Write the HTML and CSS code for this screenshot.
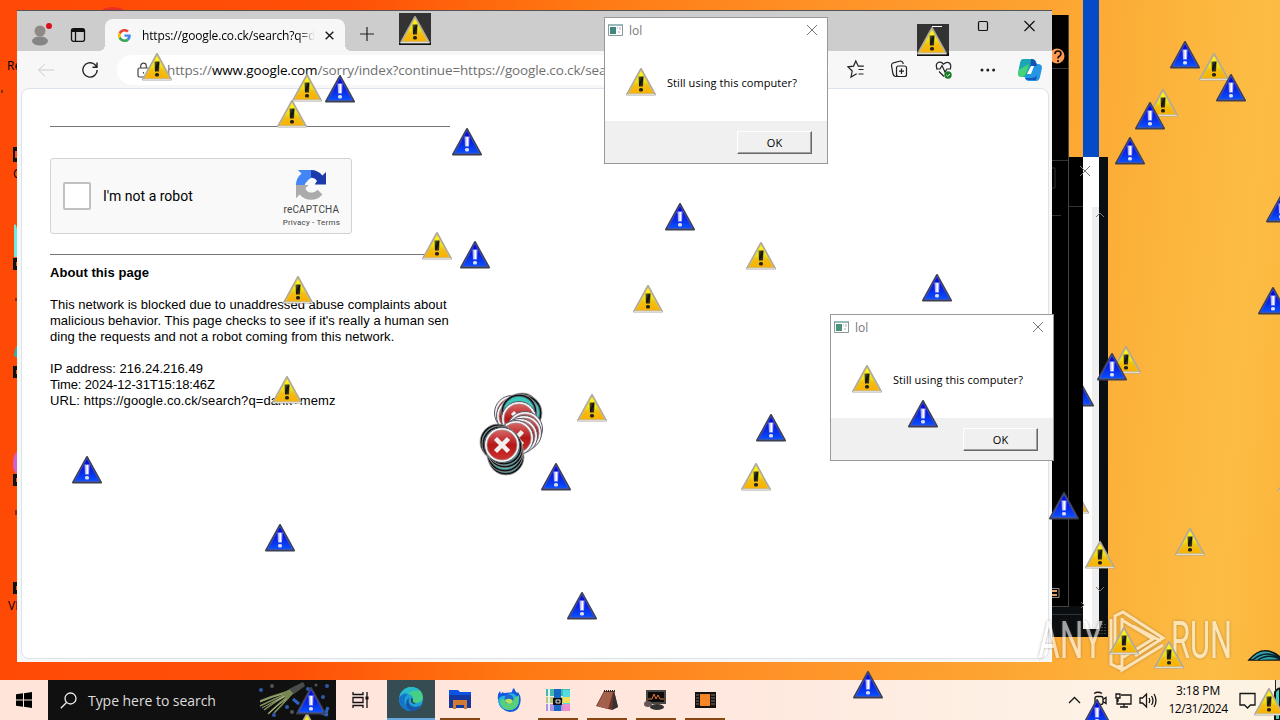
FILE: index.html
```
<!DOCTYPE html>
<html lang="en">
<head>
<meta charset="utf-8">
<title>Desktop</title>
<link rel="stylesheet" href="styles.css">
</head>
<body>
<svg class="defs" width="0" height="0">
  <defs>
    <linearGradient id="gold" x1="0" y1="0" x2="0" y2="1"><stop offset="0" stop-color="#ffff10"/><stop offset=".5" stop-color="#efe010"/><stop offset=".65" stop-color="#f0bf10"/><stop offset="1" stop-color="#fbb000"/></linearGradient>
    <linearGradient id="ink" x1="0" y1="0" x2="1" y2="1"><stop offset="0" stop-color="#6a6438"/><stop offset=".5" stop-color="#111"/><stop offset="1" stop-color="#4a4530"/></linearGradient>
    <linearGradient id="cobalt" x1="0" y1="0" x2="0" y2="1"><stop offset="0" stop-color="#0303dc"/><stop offset=".5" stop-color="#0a20e2"/><stop offset="1" stop-color="#0750ff"/></linearGradient>
    <linearGradient id="ruby" x1="0" y1="0" x2="0" y2="1"><stop offset="0" stop-color="#d76565"/><stop offset=".5" stop-color="#b51818"/><stop offset="1" stop-color="#cf3030"/></linearGradient>
    <!-- all stickers are centred on 0,0 -->
    <g id="warn">
      <path d="M0-13 14 12.600H-14z" fill="#c4c0b4" stroke="#aba79c" stroke-width="2" stroke-linejoin="round"/>
      <path d="M0-11.500 12.500 11.300H-12.500z" fill="url(#gold)" stroke="#e0c068" stroke-width=".7"/>
      <path d="M-14 12.500H14" stroke="#dedbd6" stroke-width="1"/>
      <path d="M-2.500-5.500H2.500L2 4.500H-2z" fill="url(#ink)"/><rect x="-2" y="6" width="4" height="3.600" rx="1.500" fill="#222"/>
    </g>
    <g id="note">
      <path d="M0-13 14 12.500H-14z" fill="#404563" stroke="#3c4052" stroke-width="2" stroke-linejoin="round"/>
      <path d="M0-11.500 12.500 11.300H-12.500z" fill="url(#cobalt)" stroke="#4b5fd0" stroke-width=".6"/>
      <path d="M-2.500-5.500H2.500L2 4.500H-2z" fill="#aab2f4"/><path d="M.2-5V4" stroke="#fff" stroke-width="1.600"/><rect x="-2" y="6" width="4" height="3.600" rx="1.500" fill="#dde"/>
    </g>
    <g id="stop">
      <circle r="17.500" fill="#f4f4f4" stroke="#556" stroke-width="1"/>
      <circle r="15" fill="url(#ruby)" stroke="#ab8080" stroke-width=".8"/>
      <path d="M-6.500-6.500 6.500 6.500M6.500-6.500-6.500 6.500" stroke="#f0eeee" stroke-width="4.500"/>
    </g>
    <g id="stop-inv">
      <circle r="18" fill="#111" stroke="#aaa" stroke-width=".8"/>
      <circle r="15.800" fill="#3bc9bc" stroke="#467" stroke-width=".8"/>
    </g>
  </defs>
</svg>

<div class="desktop">
  <svg class="shortcuts" width="18" height="680">
    <path d="M14 225q4-6 4 32h-4z" fill="#71eadf"/><path d="M14 356q1-9 4-12v14z" fill="#25b8a6"/><path d="M18 450q-5 5-5 14t5 10z" fill="#d060cf"/>
    <path d="M13 147h5v15h-5zM13 258h5v12h-5zM13 366h5v12h-5zM13 474h5v12h-5zM13 582h5v12h-5z" fill="#111"/>
    <path d="M15 151h3v7h-3zM16 262h2v4h-2zM16 370h2v4h-2zM16 478h2v4h-2zM16 586h2v4h-2z" fill="#ff4c08"/>
    <path d="M2 90v3M16 298v3M16 510v5" stroke="#111"/>
    <text x="7" y="70">Re</text><text x="13" y="178">C</text><text x="8" y="610">VL</text>
  </svg>
  <div class="avatar-dot"></div>

  <div class="stripe"></div>
  <div class="backwin backwin-lower"></div>
  <div class="backwin backwin-upper"></div>
  <div class="trail">
    <svg width="16" height="472"><path d="M9 50H16V472H9z" fill="#efefef"/><use href="#note" x="-4" y="236"/><use href="#warn" x="-9" y="343"/></svg>
  </div>
  <svg class="backicons" width="60" height="680">
    <circle cx="5" cy="56" r="7.500" fill="#ff9a50"/><path d="M3 54q0-3 3-3t3 3q0 1-2 2.500-1 .6-1 2M6 60v2" stroke="#111" stroke-width="1.700" fill="none"/>
    <path d="M0 68.500H16M0 160.500H16M0 215.500H9M0 168h3v20H0M17 206.500H31M0 614.500H30" stroke="#333" fill="none"/>
    <path d="M28 166l10 10M38 166l-10 10M44 217l4-4 4 4M44 587l4 4 4-4M29 602l3 3-3 3" stroke="#777" fill="none"/>
    <path d="M0 588.500h7v9H0" stroke="#888" fill="none"/><path d="M0 591h5M0 595h5" stroke="#e9a15f" stroke-width="2"/>
    <path d="M50 624v10M53 624v10M47 630v4" stroke="#777" stroke-dasharray="1 2"/>
  </svg>

  <div class="browser">
    <div class="tabstrip">
      <svg class="profile" width="26" height="26" viewBox="0 0 26 26"><ellipse cx="11" cy="20" rx="8" ry="4.500" fill="#858585"/><circle cx="11" cy="10" r="5.500" fill="#8f8986"/><circle cx="20" cy="5" r="3" fill="#d8101c"/></svg>
      <svg class="workspaces" width="16" height="16" viewBox="0 0 16 16" fill="none" stroke="#111" stroke-width="1.300"><rect x="1.500" y="1.700" width="13" height="12.600" rx="2"/><path d="M1.500 3.500H14.500" stroke-width="3"/><path d="M5.500 4V14"/></svg>
      <div class="tab">
        <svg width="13" height="13" viewBox="0 0 48 48"><path fill="#EA4335" d="M24 9.500c3.500 0 6.700 1.200 9.200 3.600l6.900-6.900C35.900 2.400 30.500 0 24 0 14.600 0 6.500 5.400 2.600 13.200l8 6.200C12.400 13.700 17.700 9.500 24 9.500z"/><path fill="#4285F4" d="M47 24.500c0-1.600-.2-3.100-.4-4.500H24v9h12.900c-.6 3-2.200 5.500-4.700 7.200l7.700 6C44.400 38 47 31.800 47 24.500z"/><path fill="#FBBC05" d="M10.500 28.600a14.500 14.500 0 0 1 0-9.200l-8-6.200a24 24 0 0 0 0 21.600z"/><path fill="#34A853" d="M24 48c6.500 0 11.900-2.100 15.900-5.800l-7.700-6c-2.200 1.500-4.900 2.300-8.200 2.300-6.300 0-11.600-4.200-13.500-9.900l-8 6.200C6.500 42.600 14.600 48 24 48z"/></svg>
        <span class="tab-title">https://google.co.ck/search?q=d</span>
        <svg width="9" height="9" viewBox="0 0 9 9"><path d="M.7.7l7.600 7.600M8.300.7L.7 8.300" stroke="#111" stroke-width="1.300"/></svg>
      </div>
      <svg class="newtab" width="14" height="14"><path d="M7 0V14M0 7H14" stroke="#222" stroke-width="1.200"/></svg>
      <svg class="caption" width="60" height="12" viewBox="0 0 60 12" fill="none" stroke="#111" stroke-width="1.200"><rect x="1.500" y="1.500" width="9" height="9" rx="1.300"/><path d="M47.500 1l10 10M57.500 1l-10 10"/></svg>
    </div>
    <div class="toolbar">
      <svg class="back" width="18" height="14" fill="none" stroke="#ccc"><path d="M17 7H1.500M8 .8L1.500 7 8 13.200"/></svg>
      <svg class="reload" width="18" height="18" fill="none" stroke="#222" stroke-width="1.400"><path d="M16.200 9A7.200 7.200 0 1 1 13.500 3.300L16 6M16 1.500V6.200H11.500"/></svg>
      <div class="address">
        <svg width="13" height="16" fill="none" stroke="#444" stroke-width="1.200"><rect x="1" y="6" width="11" height="9" rx="1.500"/><path d="M3.700 6V4a2.800 2.800 0 0 1 5.600 0V6M6.500 10v1.500"/></svg>
        <span class="url">https://<b>www.google.com</b>/sorry/index?continue=https://google.co.ck/sear</span>
      </div>
      <svg class="tools" width="200" height="26" viewBox="0 0 200 26" fill="none" stroke="#222" stroke-width="1.200">
        <path d="M9.700 16.700L4 20l1.200-6L1 9.800l5.600-.7L8.800 4l2.500 5.200h5.500M11.500 12.500h5M11.500 17h5"/>
        <path d="M50 19.500h-1.500q-2-.5-2.500-2.500l-1.500-8.500q0-2 1.800-2.700l7-1.800q2 0 2.700 2l.3 1"/><rect x="49.500" y="9" width="10" height="10.500" rx="2"/><path d="M54.500 11.500v5.500M52 14.200h5"/>
        <path d="M90 11.500q-2-4.500 1.500-6.200 3-.9 5 1.900 3-3 6-1.200 2 2 .9 5.500M89 12h4l2-3.500 3 6.500 2-3h4M92 14.500l5 5"/><circle cx="101" cy="18" r="3.700" fill="#1b7c27" stroke="none"/><path d="M99.300 18l1.200 1.200L103 17" stroke="#fff" stroke-width=".9"/>
        <g fill="#222" stroke="none"><circle cx="135" cy="13" r="1.500"/><circle cx="140.800" cy="13" r="1.500"/><circle cx="146.600" cy="13" r="1.500"/></g>
        <g stroke="none"><path d="M176 2h9q3 0 4 3l1 4h-5l-4 11h-6q-4 0-4-4l2-10q.8-4 3-4z" fill="#1aa6b2"/><path d="M173 12l9-5-2 7q-2 6-5 6-5 0-4-5z" fill="#47d17b"/><path d="M190 7h1q4 0 4 4l-2 9q-1 4-4 4h-7q-3 0-4-3l-.5-2q4 1 6-5l2-7q1-3 3-3z" fill="#2596e5"/><path d="M184 2q4 0 5 4l1 3h-3q-3 0-4 4z" fill="#1350b5"/><path d="M178 21h7q3 0 5-3l-1 5H182q-3 0-4-2z" fill="#1757c2"/><path d="M184 9h3l-3 8h-4z" fill="#fff"/></g>
      </svg>
    </div>
    <div class="page">
      <hr>
      <div class="captcha">
        <span class="box"></span>
        <span class="label">I'm not a robot</span>
        <div class="brand">
          <svg width="30" height="30" viewBox="0 0 64 64"><path fill="#1c3aa9" d="M64 32V4l-7.700 7.700A32 32 0 0 0 31.800 0v16.500a15 15 0 0 1 13 7L40 31H64z"/><path fill="#4285f4" d="M32 0H4l7.800 7.700A32 32 0 0 0 0 32h18.500l1.500-4 7-8 5-3z"/><path fill="#ababab" d="M0 32v28l7.700-7.700a32 32 0 0 0 48.800 0L46 42q-5 6-14 6c-7 0-10-4-12-9l7-7z"/></svg>
          <span>reCAPTCHA</span>
          <small>Privacy - Terms</small>
        </div>
      </div>
      <hr>
      <div class="about">
        <b>About this page</b>
        <p>This network is blocked due to unaddressed abuse complaints about<br>malicious behavior. This page checks to see if it's really a human sen<br>ding the requests and not a robot coming from this network.</p>
        <p>IP address: 216.24.216.49<br><span class="time">Time: 2024-12-31T15:18:46Z</span><br><span class="link">URL: https://google.co.ck/search?q=dank+memz</span></p>
      </div>
    </div>
  </div>

  <div class="dialog dialog-a">
    <div class="dialog-title"><svg width="15" height="12"><path d="M.5.500h14v11H.5z" fill="#fff" stroke="#899"/><path d="M1 1h13" stroke="#9bb" stroke-width="2"/><path d="M2 3h6v7H2z" fill="#3f8580"/><path d="M9 4h1M12 3v3M10 8h2" stroke="#aab"/></svg><span>lol</span><svg class="x" width="10" height="10"><path d="M0 0l10 10M10 0L0 10" stroke="#777"/></svg></div>
    <div class="dialog-body"><svg width="32" height="32" viewBox="-16 -15 32 32"><use href="#warn"/></svg><span>Still using this computer?</span></div>
    <div class="dialog-foot"><div class="ok">OK</div></div>
  </div>
  <div class="dialog dialog-b">
    <div class="dialog-title"><svg width="15" height="12"><path d="M.5.500h14v11H.5z" fill="#fff" stroke="#899"/><path d="M1 1h13" stroke="#9bb" stroke-width="2"/><path d="M2 3h6v7H2z" fill="#4b9279"/><path d="M9 4h1M12 3v3M10 8h2" stroke="#aab"/></svg><span>lol</span><svg class="x" width="10" height="10"><path d="M0 0l10 10M10 0L0 10" stroke="#777"/></svg></div>
    <div class="dialog-body"><svg width="32" height="32" viewBox="-16 -15 32 32"><use href="#warn"/></svg><span>Still using this computer?</span></div>
    <div class="dialog-foot"><div class="ok">OK</div></div>
  </div>
</div>

<div class="taskbar">
  <div class="start"><svg width="16" height="16"><path d="M0 2.300L7 1.300V7.500H0zM8 1.200L16 0V7.500H8zM0 8.500H7V14.700L0 13.700zM8 8.500H16V16L8 14.800z"/></svg></div>
  <div class="search">
    <svg width="17" height="17" fill="none" stroke="#eee" stroke-width="1.300"><circle cx="10.500" cy="6.500" r="5.500"/><path d="M6.500 10.500L.8 16.200"/></svg>
    <span>Type here to search</span>
    <svg class="art" width="76" height="40" fill="none">
      <g stroke="#7f9058" stroke-width="1.600"><path d="M28 12Q14 16 2 21M28 14Q14 20 2 26M29 15Q16 22 6 30M30 16Q20 24 10 34M31 17Q24 25 16 33"/></g><g stroke="#d9e0ad" stroke-width=".7"><path d="M28 13Q14 17 2 22M29 15Q16 21 4 28M31 17Q21 24 11 33"/></g>
      <path d="M24 13l8-4 4 4-7 7z" fill="#758851"/><path d="M31 9L45 2l2 4-11 8z" fill="#484d49"/>
      <g fill="#2e5aa7"><circle cx="3" cy="10" r="2"/><circle cx="50" cy="9" r="2"/><circle cx="69" cy="6" r="2"/><circle cx="65" cy="17" r="2"/><circle cx="16" cy="35" r="2"/><circle cx="29" cy="27" r="2"/></g><g fill="#555"><circle cx="14" cy="6" r="2"/><circle cx="34" cy="32" r="2"/><circle cx="58" cy="5" r="1.500"/></g>
      <path d="M35 19l6 5M58 31l12 4M70 27l-3 9" stroke="#2b65c0" stroke-width="3"/>
    </svg>
  </div>
  <div class="taskview"><svg width="17" height="16" fill="none" stroke="#111" stroke-width="1.300"><path d="M1 0V2.500H11V0M1 16V13.500H11V16M1 5.500H11V10.500H1zM15 0V16"/><path d="M13.500 6h3" stroke-width="3"/></svg></div>
  <div class="apps">
    <div class="app active"><svg width="24" height="24" viewBox="0 0 24 24"><circle cx="12" cy="12" r="12" fill="#1f9fd8"/><path d="M1 8Q6-1 14 .2 24 2 24 11q-1 5-7 5-4 0-3-3 1-5-5-6-5 0-8 5z" fill="#45cf87"/><path d="M1 8Q5 1 12 0q6 0 9 4-8-2-12 3-4 0-8 4z" fill="#27b9d0"/><path d="M9 7q-5 4-3 10 2 6 9 7Q7 25 3 20q-3-4-3-9 4-6 9-4z" fill="#1474c9"/><path d="M10 10q-2 9 6 10 3 0 6-2-4 7-10 6-9-5-2-14z" fill="#1856a9"/><path d="M12 11q2 0 2 2-1 3 3 3l-2 1q-4-1-3-6z" fill="#294d55"/></svg></div>
    <div class="app open"><svg width="22" height="20"><path d="M0 0h9l2 2h11v16H0z" fill="#0a54e5"/><path d="M0 5h22v13H0z" fill="#1437a0"/><path d="M4 19V10h14v9h-3v-4H7v4z" fill="#d07a35"/></svg></div>
    <div class="app"><svg width="24" height="24"><path d="M1 12Q0 6 3 3l1 3Q5 3 7 5q5 0 8-1 0-3 2-4 1 3 3 5l1-1q4 5 2 12-2 8-10 8Q2 22 1 12z" fill="#1558e0"/><path d="M1 12q3-5 8-4 4-4 8-2 5 3 5 9-3 7-9 7Q2 22 1 12z" fill="#25b5d9"/><path d="M3 13q4-4 8-2 6 1 11-4 1 15-10 15Q5 22 3 13z" fill="#58cf7b"/><circle cx="12" cy="11" r="4.500" fill="#2066d7"/><path d="M8 12q5-3 8 1-3 6-8 0z" fill="#b3e55a"/></svg></div>
    <div class="app open"><svg width="24" height="22"><path d="M0 0h24v7H0z" fill="#42b9ae"/><path d="M0 8h24v6H0z" fill="#bcc675"/><path d="M0 15h24v7H0z" fill="#b491dc"/><path d="M17 1h7v21h-7z" fill="#53dce1"/><path d="M17 8h7v6h-7z" fill="#eee05d"/><path d="M17 15h7v7h-7z" fill="#ef8cc9"/><path d="M3 0v22M14 0v22" stroke="#e3f2ef" stroke-width="2"/><path d="M8 0h7v22H8z" fill="#1668c6"/><path d="M7 9h9v7H7z" fill="#111"/><path d="M10 11h4v3h-4z" fill="none" stroke="#ddd"/></svg></div>
    <div class="app open"><svg width="23" height="21"><path d="M8 1h10l4 16-6 3-16-4z" fill="#6e3328"/><path d="M8 2h9l-5 17L1 16z" fill="#a3604d"/><path d="M18 1l4 16-6 3z" fill="#333"/><path d="M8 1h11" stroke="#222" stroke-width="2" stroke-dasharray="1 1"/></svg></div>
    <div class="app open"><svg width="24" height="22"><path d="M2 1h20v14H2z" fill="#4a4744"/><path d="M4 3h16v10H4z" fill="#0b0b0b"/><path d="M4 10h4l2-5 2 5 2-4 2 4h4" stroke="#e07638" fill="none"/><ellipse cx="4" cy="15" rx="4" ry="3" fill="#655"/><ellipse cx="13" cy="18" rx="7" ry="3" fill="#333"/></svg></div>
    <div class="app open"><svg width="21" height="16"><path d="M0 0h21v16H0z" fill="#17110d"/><path d="M5 2h10v12H5z" fill="#f68527"/><path d="M1 3h3M1 6h3M1 9h3M1 12h3M16 3h4M16 6h4M16 9h4M16 12h4" stroke="#777"/></svg></div>
  </div>
  <div class="tray">
    <svg width="90" height="20" fill="none" stroke="#151515" stroke-width="1.300"><path d="M2 13l5.500-5.500L13 13M27 3.500q4-2.500 8 0M27 17.500q4 2.500 8 0M36 9.500l3-2v6l-3-2"/><rect x="28" y="6.500" width="8" height="8" rx="2"/><path d="M54 5H64V14H50V9M57 14v3M53 17H61M49 4h4v4H49zM51 8v4M73 8h2.500l4-4v13l-4-4H73zM82 8q1.500 2.500 0 5M84.500 6q3 4.500 0 9M87 4q4 6.500 0 13"/></svg>
    <div class="clock"><span>3:18 PM</span><span class="date">12/31/2024</span></div>
    <svg width="17" height="17" fill="none" stroke="#151515" stroke-width="1.300"><path d="M1 1.500H16V13H11.500L8.500 16 5.500 13H1z"/></svg>
  </div>
</div>

<svg class="stickers" width="1280" height="720" viewBox="0 0 1280 720">
  <g class="mark">
    <text x="1038" y="658" textLength="65" lengthAdjust="spacingAndGlyphs">ANY</text>
    <text x="1171" y="658" textLength="61" lengthAdjust="spacingAndGlyphs">RUN</text>
    <path d="M1119 665V668L1111 664V619M1115 652V616L1123 612 1163 638 1135 656M1122 618V670L1163 645M1122 620L1153 639 1122 658M1133 626L1161 641"/>
  </g>
  <path d="M399 13h32v32h-32z" fill="#333"/><path d="M917 24h32v32h-32z" fill="#333"/><path d="M399 43h32v2h-32zM917 53h32v3h-32z" fill="#111"/>
  <use href="#stop" x="512" y="413"/><use href="#stop" x="514" y="416"/>
  <use href="#stop-inv" x="522" y="411"/><use href="#stop-inv" x="524" y="413"/><use href="#stop-inv" x="519" y="412"/>
  <use href="#stop" x="519" y="419"/>
  <use href="#stop" x="525" y="429"/><use href="#stop" x="524" y="433"/><use href="#stop" x="520" y="436"/><use href="#stop" x="516" y="438"/>
  <use href="#stop-inv" x="498" y="442"/><use href="#stop-inv" x="500" y="444"/><use href="#stop-inv" x="506" y="457"/><use href="#stop-inv" x="505" y="454"/><use href="#stop-inv" x="505" y="450"/><use href="#stop-inv" x="504" y="447"/>
  <use href="#stop" x="502" y="445"/>

  <use href="#warn" x="415" y="30"/><use href="#warn" x="932" y="41"/><path d="M932 26.500h10" stroke="#fff"/>
  <use href="#warn" x="157" y="67"/><use href="#warn" x="307" y="88"/><use href="#warn" x="292" y="114"/>
  <use href="#warn" x="437" y="246"/><use href="#warn" x="298" y="290"/><use href="#warn" x="287" y="390"/>
  <use href="#warn" x="761" y="256"/><use href="#warn" x="648" y="299"/><use href="#warn" x="592" y="408"/><use href="#warn" x="756" y="477"/>
  <use href="#warn" x="1214" y="67"/><use href="#warn" x="1163" y="103"/><use href="#warn" x="1126" y="360"/><use href="#warn" x="1190" y="542"/>
  <use href="#warn" x="1100" y="555"/><use href="#warn" x="1124" y="641"/><use href="#warn" x="1169" y="655"/>
  <use href="#warn" x="1293" y="478"/><use href="#warn" x="307" y="727"/>
  <use href="#note" x="340" y="89"/><use href="#note" x="467" y="142"/><use href="#note" x="475" y="255"/><use href="#note" x="680" y="217"/>
  <use href="#note" x="937" y="288"/><use href="#note" x="923" y="414"/><use href="#note" x="771" y="428"/><use href="#note" x="556" y="477"/>
  <use href="#note" x="87" y="470"/><use href="#note" x="280" y="538"/><use href="#note" x="582" y="606"/><use href="#note" x="868" y="685"/>
  <use href="#note" x="1185" y="55"/><use href="#note" x="1231" y="88"/><use href="#note" x="1150" y="116"/><use href="#note" x="1130" y="151"/>
  <use href="#note" x="1281" y="209"/><use href="#note" x="1273" y="301"/><use href="#note" x="1112" y="367"/><use href="#note" x="1064" y="506"/>
  <use href="#note" x="1097" y="713"/><use href="#note" x="311" y="701"/>
  <g fill="#31a0a8" stroke="#111" stroke-width="1.500"><path d="M1249 660q14-17 31-3v3z"/><path d="M1253 660q12-11 27-2M1258 660q10-7 22-1" stroke="#06202a"/></g>
  <path d="M1275 680v40h5v-40z" fill="#eae3d5"/><path d="M1275.500 680v10" stroke="#222"/><path d="M1275 692q4-5 5-3v31h-5z" fill="#43cdbe" stroke="#111" stroke-width="2"/>
  <use href="#warn" x="1269" y="702"/>
</svg>
</body>
</html>
```
FILE: styles.css
```
html, body { height: 100%; }
body { margin: 0; overflow: hidden; position: relative; display: flex; flex-direction: column; font-family: "Open Sans", "Noto Sans", sans-serif; color: #000; }
svg { flex: none; display: block; }
.defs { position: absolute; }

.desktop { position: relative; height: 680px; flex: none; overflow: hidden; background: linear-gradient(95deg, #ff4906 0%, #ff5007 26%, #ff7812 43%, #ff9228 62%, #fda332 78%, #fcb139 86%, #fcbd45 95%, #fcb43a 100%); }
.shortcuts { position: absolute; left: 0; top: 0; font-size: 12px; }
.avatar-dot { position: absolute; left: 100px; top: 7px; width: 26px; height: 12px; border-radius: 50%; background: #e63224; }

.stripe { position: absolute; left: 1083px; top: 0; width: 16px; height: 157px; background: #054bc5; }
.backwin { position: absolute; box-sizing: border-box; background: #000; }
.backwin-lower { left: 1040px; top: 157px; width: 68px; height: 480px; border-bottom: 31px solid #0b0e10; border-right: 9px solid #0b0e10; }
.backwin-upper { left: 1040px; top: 15px; width: 29px; height: 592px; border-right: 1px solid #444; border-bottom: 1px solid #444; }
.trail { position: absolute; left: 1083px; top: 157px; width: 16px; height: 472px; background: #fff; overflow: hidden; }
.backicons { position: absolute; left: 1052px; top: 0; }

/* browser window */
.browser { position: absolute; left: 17px; top: 10px; width: 1035px; height: 652px; box-sizing: border-box; border-top: 1px solid #555; background: #f7f7f7; display: flex; flex-direction: column; }
.tabstrip { height: 40px; display: flex; align-items: center; background: #cdcdcd; padding-left: 12px; }
.profile { margin-top: 6px; }
.workspaces { margin: 7px 0 0 15px; }
.tab { align-self: flex-end; position: relative; width: 240px; height: 32px; margin-left: 19px; box-sizing: border-box; padding: 0 11px 0 13px; border-radius: 8px 8px 0 0; background: #f7f7f7; display: flex; align-items: center; }
/* flared feet of the active tab */
.tab::before, .tab::after { content: ""; position: absolute; bottom: 0; width: 6px; height: 6px; }
.tab::before { left: -6px; background: radial-gradient(circle at 0 0, transparent 6px, #f7f7f7 6px); }
.tab::after { right: -6px; background: radial-gradient(circle at 100% 0, transparent 6px, #f7f7f7 6px); }
.tab-title { flex: 1; margin: 0 10px 0 11px; font-size: 12px; letter-spacing: -.14px; white-space: nowrap; overflow: hidden; -webkit-mask-image: linear-gradient(90deg, #000 90%, transparent); mask-image: linear-gradient(90deg, #000 90%, transparent); }
.newtab { margin: 6px 0 0 15px; }
.caption { margin: -10px 15px 0 auto; }
.toolbar { height: 37px; display: flex; align-items: center; padding: 0 5px 0 20px; }
.reload { margin-left: 26px; }
.address { width: 712px; height: 30px; margin-left: 18px; box-sizing: border-box; padding-left: 20px; border-radius: 15px; background: #fff; display: flex; align-items: center; }
.url { margin-left: 17px; font-size: 13.500px; letter-spacing: -.14px; color: #707070; white-space: nowrap; }
.url b { font-weight: 400; color: #000; }
.tools { margin-left: auto; }
.page { flex: 1; margin: 0 3px 3px 4px; padding: 37px 28px 0; border: 1px solid #dde3ea; border-radius: 8px; background: #fff; font-family: "Liberation Sans", Arial, sans-serif; }
.page hr { width: 400px; height: 1px; margin: 0; border: 0; background: #777; }
.captcha { width: 302px; height: 76px; margin: 31px 0 20px; box-sizing: border-box; padding: 0 10px 0 12px; border: 1px solid #d3d3d3; border-radius: 3px; background: #f9f9f9; display: flex; align-items: center; font-family: Roboto, sans-serif; }
.box { width: 24px; height: 24px; border: 2px solid #c1c1c1; border-radius: 2px; background: #fff; }
.label { margin-left: 12px; font-size: 14px; }
.brand { margin: 6px 1px 0 auto; display: flex; flex-direction: column; align-items: center; color: #444; }
.brand span { margin-top: 4px; font-size: 10px; line-height: 12px; letter-spacing: .2px; }
.brand small { margin-top: 1px; font-size: 8px; line-height: 11px; letter-spacing: .2px; }
.about { margin-top: 10px; font-size: 13px; line-height: 16px; letter-spacing: .03px; white-space: nowrap; }
.about b { letter-spacing: .05px; }
.about p { margin: 16px 0; }
.time { letter-spacing: -.15px; }
.link { letter-spacing: .1px; }

/* message boxes */
.dialog { position: absolute; width: 224px; height: 147px; box-sizing: border-box; border: 1px solid #999; background: #fff; display: flex; flex-direction: column; }
.dialog-a { left: 604px; top: 17px; }
.dialog-b { left: 830px; top: 314px; }
.dialog-title { height: 24px; display: flex; align-items: center; padding: 0 10px 0 3px; font-size: 12px; color: #777; }
.dialog-title span { margin-left: 6px; }
.dialog-title .x { margin-left: auto; }
.dialog-body { flex: 1; display: flex; align-items: center; padding: 2px 0 0 20px; font-size: 11px; letter-spacing: .08px; }
.dialog-body span { margin-left: 10px; white-space: nowrap; }
.dialog-foot { height: 42px; padding-right: 15px; background: #f0f0f0; display: flex; align-items: center; justify-content: flex-end; }
.ok { width: 73px; height: 21px; border: 1px solid #fff; border-right-color: #696969; border-bottom-color: #696969; box-shadow: inset -1px -1px #a0a0a0; font-size: 11px; line-height: 21px; text-align: center; }

/* taskbar */
.taskbar { height: 40px; flex: none; display: flex; background: linear-gradient(90deg, #ffe4da 0%, #ffe7de 55%, #fdf2e5 85%, #fdf3e3 100%); }
.start { width: 48px; display: flex; align-items: center; justify-content: center; }
.search { width: 288px; box-sizing: border-box; padding-left: 12px; background: #101010; display: flex; align-items: center; color: #ddd; font-size: 14px; }
.search span { margin-left: 11px; letter-spacing: -.05px; white-space: nowrap; }
.search .art { margin: 0 2px 0 auto; }
.taskview { width: 51px; padding-right: 3px; box-sizing: border-box; display: flex; align-items: center; justify-content: center; }
.apps { display: flex; gap: 1px; }
.app { width: 48px; height: 40px; box-sizing: border-box; display: flex; align-items: center; justify-content: center; }
.app.active { background: #354c52; border-bottom: 2px solid #65a9df; }
.app.open { background: linear-gradient(#874911, #874911) 50% 100% / 40px 2px no-repeat; }
.tray { margin-left: auto; padding-right: 24px; display: flex; align-items: center; }
.clock { width: 76px; margin: 0 3px 0 3px; display: flex; flex-direction: column; align-items: center; font-size: 12px; line-height: 18px; letter-spacing: -.1px; white-space: nowrap; }
.date { letter-spacing: -.45px; }

.stickers { position: absolute; left: 0; top: 0; pointer-events: none; }
.mark { opacity: .62; fill: #fff; filter: drop-shadow(0 0 1.500px rgba(100, 80, 60, .7)); }
.mark text { font: 400 51px Roboto, sans-serif; }
.mark path { fill: none; stroke: #fff; stroke-width: 3; }
```
